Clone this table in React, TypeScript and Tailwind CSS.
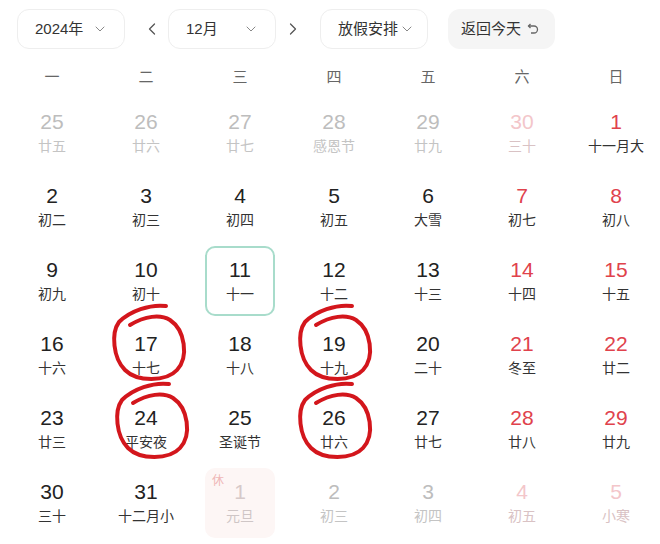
import React from 'react';
import { ChevronDown, ChevronLeft, ChevronRight } from 'lucide-react';

type Day = {
  d: number;
  lunar: string;
  other?: boolean;
  weekend?: boolean;
  today?: boolean;
  rest?: boolean;
};

const weekdays = ['一', '二', '三', '四', '五', '六', '日'];

const rows: Day[][] = [
  [
    { d: 25, lunar: '廿五', other: true },
    { d: 26, lunar: '廿六', other: true },
    { d: 27, lunar: '廿七', other: true },
    { d: 28, lunar: '感恩节', other: true },
    { d: 29, lunar: '廿九', other: true },
    { d: 30, lunar: '三十', other: true, weekend: true },
    { d: 1, lunar: '十一月大', weekend: true },
  ],
  [
    { d: 2, lunar: '初二' },
    { d: 3, lunar: '初三' },
    { d: 4, lunar: '初四' },
    { d: 5, lunar: '初五' },
    { d: 6, lunar: '大雪' },
    { d: 7, lunar: '初七', weekend: true },
    { d: 8, lunar: '初八', weekend: true },
  ],
  [
    { d: 9, lunar: '初九' },
    { d: 10, lunar: '初十' },
    { d: 11, lunar: '十一', today: true },
    { d: 12, lunar: '十二' },
    { d: 13, lunar: '十三' },
    { d: 14, lunar: '十四', weekend: true },
    { d: 15, lunar: '十五', weekend: true },
  ],
  [
    { d: 16, lunar: '十六' },
    { d: 17, lunar: '十七' },
    { d: 18, lunar: '十八' },
    { d: 19, lunar: '十九' },
    { d: 20, lunar: '二十' },
    { d: 21, lunar: '冬至', weekend: true },
    { d: 22, lunar: '廿二', weekend: true },
  ],
  [
    { d: 23, lunar: '廿三' },
    { d: 24, lunar: '平安夜' },
    { d: 25, lunar: '圣诞节' },
    { d: 26, lunar: '廿六' },
    { d: 27, lunar: '廿七' },
    { d: 28, lunar: '廿八', weekend: true },
    { d: 29, lunar: '廿九', weekend: true },
  ],
  [
    { d: 30, lunar: '三十' },
    { d: 31, lunar: '十二月小' },
    { d: 1, lunar: '元旦', other: true, rest: true },
    { d: 2, lunar: '初三', other: true },
    { d: 3, lunar: '初四', other: true },
    { d: 4, lunar: '初五', other: true, weekend: true },
    { d: 5, lunar: '小寒', other: true, weekend: true },
  ],
];

const font = { fontFamily: '"Liberation Sans", "Noto Sans CJK SC", sans-serif' };

const Select = ({ label }: { label: string }) => (
  <div className="h-10 w-[108px] flex items-center justify-between pl-[17px] pr-[16px] rounded-xl border border-[#eeeeee] bg-white text-[15px] text-[#333]">
    <span>{label}</span>
    <ChevronDown className="w-4 h-4 text-[#888]" strokeWidth={1.5} />
  </div>
);

const Cell = ({ day }: { day: Day }) => {
  let numColor = 'text-[#222]';
  let lunarColor = 'text-[#333]';
  if (day.weekend) numColor = 'text-[#e0424c]';
  if (day.other) {
    numColor = day.weekend ? 'text-[#f3c6ca]' : 'text-[#bdbdbd]';
    lunarColor = day.weekend ? 'text-[#d9c2c4]' : 'text-[#c4c4c4]';
  }
  if (day.rest) {
    numColor = 'text-[#d6c9c9]';
    lunarColor = 'text-[#cfc6c6]';
  }
  return (
    <div className="h-[74px] flex items-center justify-center">
      <div
        className={`relative w-[70px] h-[70px] rounded-[10px] flex flex-col items-center justify-center pb-[2px] ${
          day.today ? 'border-2 border-[#a8dccb]' : ''
        } ${day.rest ? 'bg-[#fdf6f5]' : ''}`}
      >
        {day.rest && (
          <span className="absolute left-[7px] top-[4px] text-[12px] text-[#efb7b7]">休</span>
        )}
        <span className={`text-[21px] leading-[24px] ${numColor}`}>{day.d}</span>
        <span className={`mt-[3px] text-[14px] leading-[18px] ${lunarColor}`}>{day.lunar}</span>
      </div>
    </div>
  );
};

// hand-drawn red ring over a date
const Scribble = ({ x, y }: { x: number; y: number }) => (
  <svg
    className="absolute pointer-events-none"
    style={{ left: x, top: y }}
    width="80"
    height="84"
    viewBox="0 0 80 84"
    fill="none"
  >
    <path
      d="M56 4 C40 2 20 9 9 20 C1 31 3 56 15 68 C27 80 56 80 67 68 C79 55 75 28 60 18 C50 12 35 14 20 23"
      stroke="#d3161c"
      strokeWidth="4"
      strokeLinecap="round"
    />
  </svg>
);

export default function App() {
  return (
    <div className="relative w-[660px] h-[544px] bg-white overflow-hidden" style={font}>
      {/* toolbar */}
      <div className="flex items-center pt-[9px] pl-[17px]">
        <Select label="2024年" />
        <ChevronLeft className="w-5 h-5 ml-[17px] mr-[6px] text-[#555]" strokeWidth={1.5} />
        <Select label="12月" />
        <ChevronRight className="w-5 h-5 ml-[7px] mr-[17px] text-[#555]" strokeWidth={1.5} />
        <div className="h-10 w-[108px] flex items-center justify-between pl-[17px] pr-[12px] rounded-xl border border-[#eeeeee] text-[15px] text-[#333]">
          <span>放假安排</span>
          <ChevronDown className="w-4 h-4 text-[#888]" strokeWidth={1.5} />
        </div>
        <div className="ml-[20px] h-10 w-[107px] flex items-center gap-[6px] pl-[13px] rounded-xl bg-[#f5f5f5] text-[15px] text-[#333]">
          <span>返回今天</span>
          <svg width="12" height="12" viewBox="0 0 12 12" fill="none" stroke="#666" strokeWidth="1.3">
            <path d="M3.5 1 L1.5 3 L3.5 5" />
            <path d="M1.5 3 H7 A3.5 3.5 0 0 1 7 10 H4" />
          </svg>
        </div>
      </div>

      {/* weekdays */}
      <div className="grid grid-cols-[repeat(7,94px)] pl-[5px] h-[47px] pt-[9px] items-center">
        {weekdays.map(w => (
          <div key={w} className="text-center text-[15px] text-[#666]">{w}</div>
        ))}
      </div>

      {/* days */}
      <div className="grid grid-cols-[repeat(7,94px)] pl-[5px]">
        {rows.flat().map((day, i) => (
          <Cell key={i} day={day} />
        ))}
      </div>

      <Scribble x={110} y={302} />
      <Scribble x={296} y={302} />
      <Scribble x={113} y={380} />
      <Scribble x={296} y={380} />
    </div>
  );
}
